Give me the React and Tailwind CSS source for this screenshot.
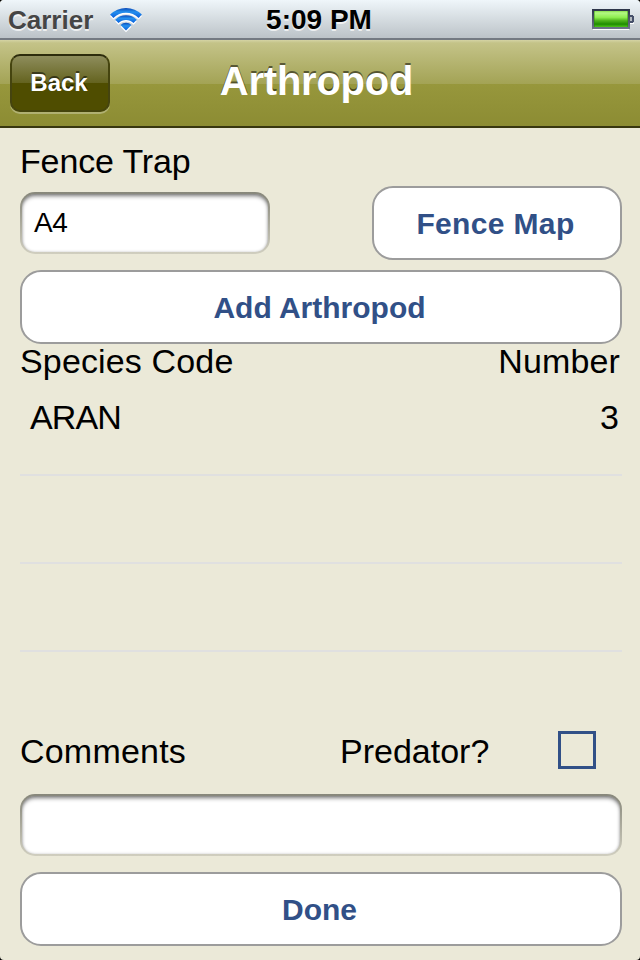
import React from "react";

function Wifi() {
  return (
    <svg width="34" height="28" viewBox="0 0 34 28" className="mt-1">
      <defs>
        <linearGradient id="wave" x1="0" y1="0" x2="0" y2="1">
          <stop offset="0" stopColor="#0b49b8" />
          <stop offset="0.4" stopColor="#2490ee" />
          <stop offset="1" stopColor="#0b5fdc" />
        </linearGradient>
      </defs>
      <g transform="translate(0 1.7)" fill="#ffffff">
        <path d="M1.1 7.6A22.5 22.5 0 0 1 32.9 7.6L29.6 10.9A17.8 17.8 0 0 0 4.4 10.9Z" />
        <path d="M6.2 12.7A15.3 15.3 0 0 1 27.8 12.7L24.5 16A10.6 10.6 0 0 0 9.5 16Z" />
        <path d="M11.5 18A7.8 7.8 0 0 1 22.5 18L17 23.5Z" />
      </g>
      <g fill="url(#wave)">
        <path d="M1.1 7.6A22.5 22.5 0 0 1 32.9 7.6L29.6 10.9A17.8 17.8 0 0 0 4.4 10.9Z" />
        <path d="M6.2 12.7A15.3 15.3 0 0 1 27.8 12.7L24.5 16A10.6 10.6 0 0 0 9.5 16Z" />
        <path d="M11.5 18A7.8 7.8 0 0 1 22.5 18L17 23.5Z" />
      </g>
    </svg>
  );
}

function Battery() {
  return (
    <svg width="42" height="21" viewBox="0 0 42 21" shapeRendering="crispEdges">
      <defs>
        <linearGradient id="charge" x1="0" y1="0" x2="0" y2="1">
          <stop offset="0" stopColor="#8ae04c" />
          <stop offset="0.12" stopColor="#b4f884" />
          <stop offset="0.4" stopColor="#8fee50" />
          <stop offset="0.6" stopColor="#4fb41c" />
          <stop offset="0.82" stopColor="#1f8c00" />
          <stop offset="1" stopColor="#4cc418" />
        </linearGradient>
        <linearGradient id="case" x1="0" y1="0" x2="0" y2="1">
          <stop offset="0" stopColor="#2c3448" />
          <stop offset="1" stopColor="#6d7488" />
        </linearGradient>
      </defs>
      <path d="M1 20H37V21H1ZM38 14H42V15H38Z" fill="#ffffff" />
      <rect width="38" height="20" fill="url(#case)" />
      <rect x="2" y="2" width="34" height="16" fill="url(#charge)" />
      <path d="M2 2H3V18H2ZM35 2H36V18H35Z" fill="#2b8a0c" fillOpacity="0.45" />
      <path d="M38 6H41V7H42V13H41V14H38V12H40V8H38Z" fill="#46506a" />
      <rect x="38" y="8" width="2" height="4" fill="#b3b9bf" />
    </svg>
  );
}

function RoundButton({ children, className }) {
  return (
    <button
      className={`flex h-[74px] items-center justify-center rounded-[21px] border-2 border-[#9c9c9c] bg-white pt-px pr-[3px] text-[30px] leading-none font-bold text-[#315087] ${className}`}
    >
      {children}
    </button>
  );
}

function Field({ value, className }) {
  return (
    <div className={`h-[62px] rounded-[15px] bg-linear-to-b from-[#87877b] to-[#d0cebf] p-[2px] ${className}`}>
      <div className="flex h-full items-center rounded-[13px] bg-white px-3 pb-px text-[28px] leading-none tracking-[-0.5px] shadow-[inset_0_3px_4px_-1px_rgba(0,0,0,0.5),inset_0_0_3px_rgba(0,0,0,0.22)]">
        {value}
      </div>
    </div>
  );
}

export default function App() {
  return (
    <div className="h-[960px] w-[640px] overflow-hidden bg-black font-['Liberation_Sans',Arial,sans-serif] text-black">
      <div className="flex h-full flex-col overflow-hidden rounded-[4px] bg-[#ebe9d8]">
        <header className="grid h-10 shrink-0 grid-cols-[1fr_auto_1fr] items-center border-b-2 border-[#747a82] bg-linear-to-b from-[#eff6fa] to-[#bcc3c8] text-[28px] leading-none font-bold">
          <div className="flex items-center gap-4 pl-2 text-[26px] text-[#454545] [text-shadow:0_2px_0_rgba(255,255,255,0.7)]">
            <span className="pt-0.5">Carrier</span>
            <Wifi />
          </div>
          <div className="pt-0.5 pr-0.5 [text-shadow:0_2px_0_rgba(255,255,255,0.7)]">5:09 PM</div>
          <div className="flex justify-end pr-1.5">
            <Battery />
          </div>
        </header>

        <nav className="grid h-[88px] shrink-0 grid-cols-[1fr_auto_1fr] items-center border-b-2 border-[#37360f] bg-[linear-gradient(to_bottom,#d4d3a4_0,#c4c388_3px,#a3a355_44px,#97973c_44px,#8c8c33_100%)] px-2.5">
          <button className="flex h-[58px] w-[100px] items-center justify-center rounded-[10px] border-2 border-t-[#2d2c0c] border-x-[#45440f] border-b-[#45440c] bg-[linear-gradient(to_bottom,#8e8d5c,#64631f_50%,#4f4d00_50%,#4f4d00)] pr-0.5 text-2xl leading-none font-bold text-white shadow-[0_2px_0_rgba(255,255,255,0.3)] [text-shadow:0_-2px_0_rgba(0,0,0,0.5)]">
            Back
          </button>
          <h1 className="mt-[-4px] pr-[7px] text-[40px] leading-none font-bold tracking-[-0.25px] text-white [text-shadow:0_-2px_0_rgba(0,0,0,0.5)]">
            Arthropod
          </h1>
          <span />
        </nav>

        <main className="flex w-[622px] flex-col pl-5 text-[34px] leading-10">
          <div className="flex justify-between">
            <div>
              <div className="mt-[13px] mb-[11px] tracking-[-0.15px]">Fence Trap</div>
              <Field value="A4" className="w-[250px]" />
            </div>
            <RoundButton className="mt-[58px] w-[250px] tracking-[0.35px]">Fence Map</RoundButton>
          </div>
          <RoundButton className="mt-2.5 w-full">Add Arthropod</RoundButton>
          <div className="mt-[-3px] flex h-[47px] justify-between pr-0.5">
            <span className="tracking-[0.15px]">Species Code</span>
            <span className="tracking-[0.15px]">Number</span>
          </div>
          <div className="flex h-[88px] justify-between border-b-2 border-[#e0e0e0] pt-[9px] pr-[3px] pl-2.5">
            <span className="tracking-[-0.9px]">ARAN</span>
            <span>3</span>
          </div>
          <div className="h-[88px] border-b-2 border-[#e0e0e0]" />
          <div className="h-[88px] border-b-2 border-[#e0e0e0]" />
          <div className="mt-[79px] flex h-[63px]">
            <span className="w-[320px] tracking-[0.2px]">Comments</span>
            <span className="w-[218px]">Predator?</span>
            <span className="h-[38px] w-[38px] border-[3px] border-[#315087]" />
          </div>
          <Field className="w-full" />
          <RoundButton className="mt-4 w-full">Done</RoundButton>
        </main>
      </div>
    </div>
  );
}
